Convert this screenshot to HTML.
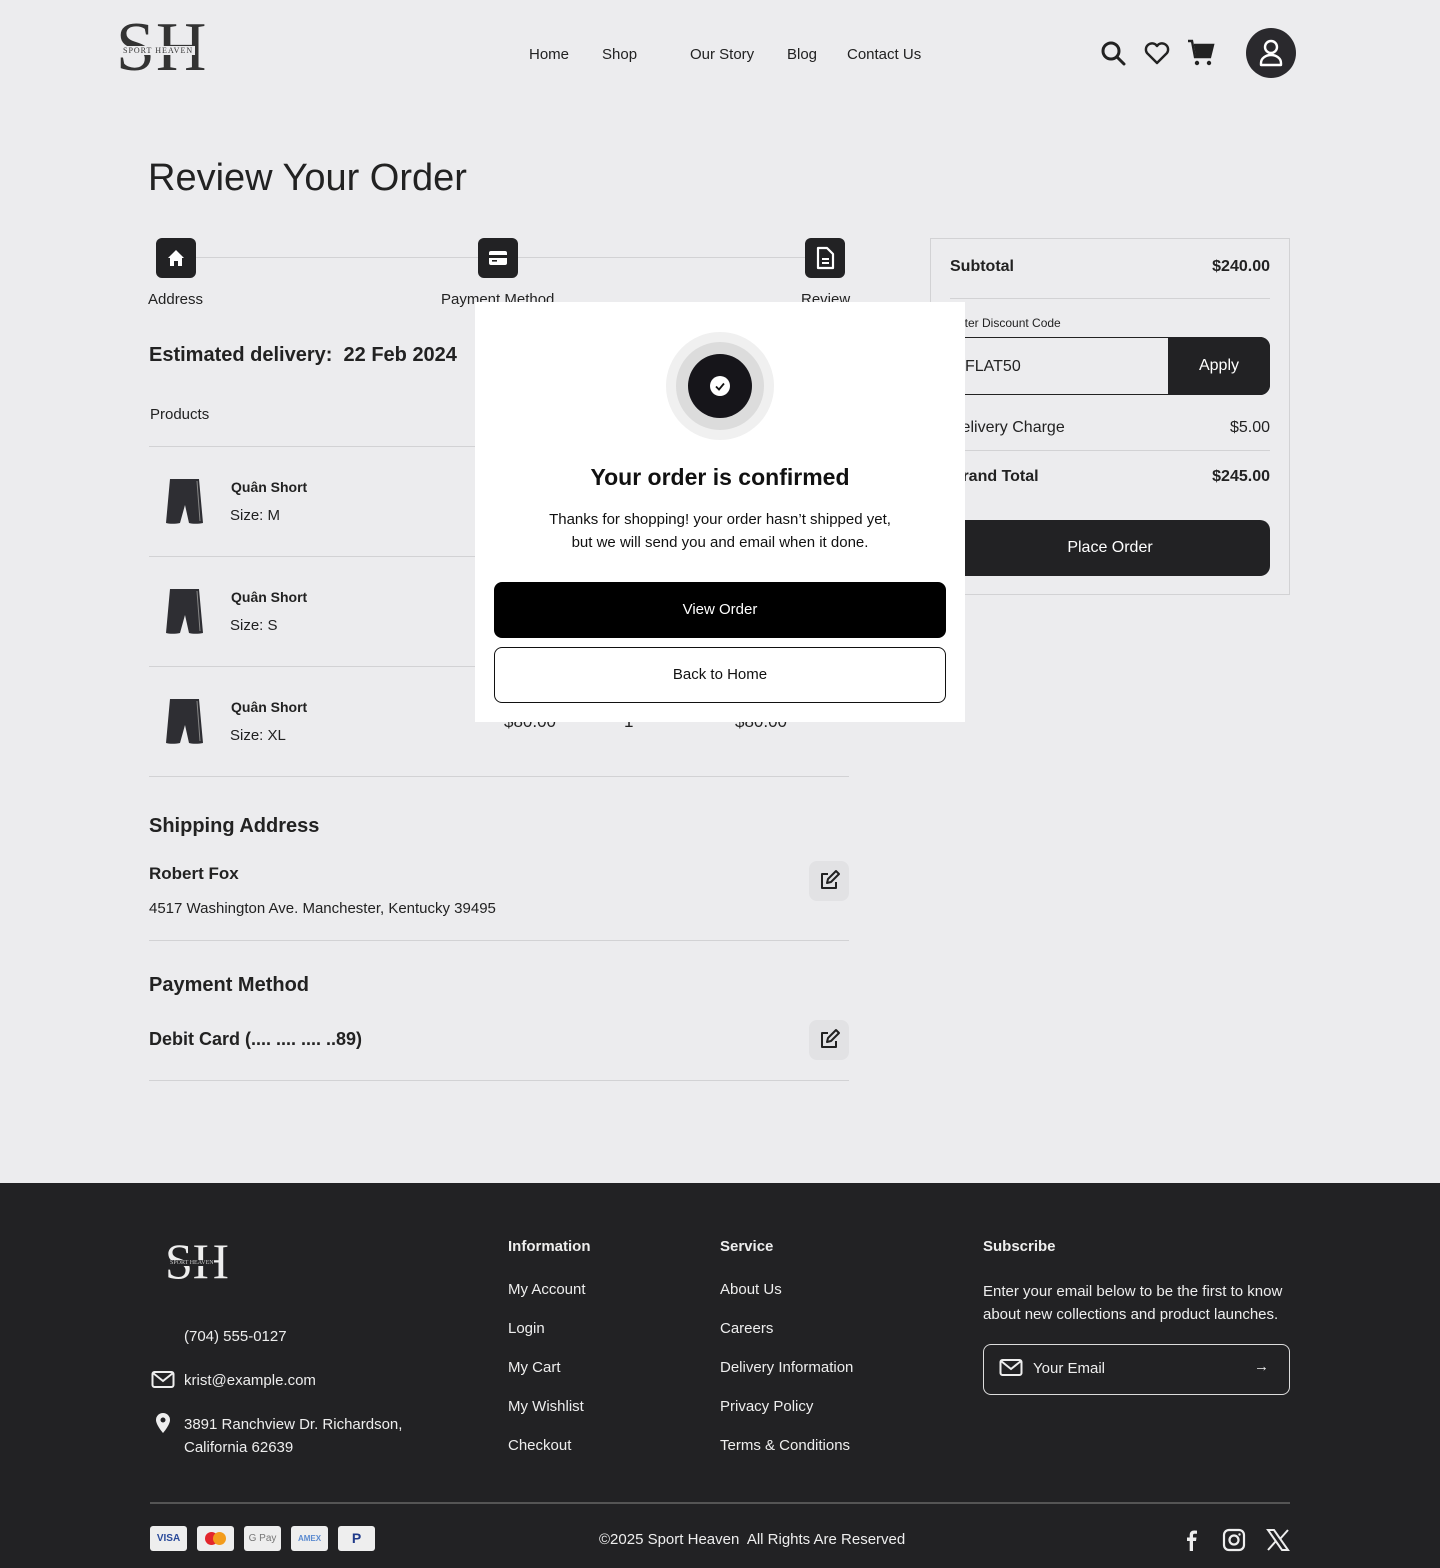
<!DOCTYPE html>
<html><head><meta charset="utf-8">
<style>
*{margin:0;padding:0;box-sizing:border-box}
body{width:1440px;height:1568px;background:#ececee;font-family:"Liberation Sans",sans-serif;color:#222;position:relative;overflow:hidden}
.a{position:absolute;white-space:nowrap}
.nav{font-size:15px;color:#222;top:46px}
.hr{position:absolute;height:1px;background:#d2d2d4}
.step{position:absolute;width:40px;height:40px;background:#222224;border-radius:6px;top:238px}
.b{font-weight:bold}
.pimg{position:absolute;left:165px;width:40px;height:48px}
.edit{position:absolute;left:809px;width:40px;height:40px;border-radius:8px;background:#e2e2e4}
.f{color:#eee;font-size:15px}
.pay{position:absolute;top:1526px;width:37px;height:25px;background:#eee;border-radius:3px;font-size:10px;font-weight:bold;text-align:center;line-height:25px}
.r{text-align:right}
</style></head><body>

<div class="a" style="left:116px;top:10px;font-family:'Liberation Serif',serif;font-size:70px;line-height:76px;color:#333;letter-spacing:1px">SH</div>
<div class="a" style="left:121px;top:46px;font-family:'Liberation Serif',serif;font-size:8px;color:#333;letter-spacing:1px;background:#ececee;padding:0 2px">SPORT HEAVEN</div>

<div class="a nav" style="left:529px">Home</div>
<div class="a nav" style="left:602px">Shop</div>
<div class="a nav" style="left:690px">Our Story</div>
<div class="a nav" style="left:787px">Blog</div>
<div class="a nav" style="left:847px">Contact Us</div>

<svg class="a" style="left:1100px;top:40px" width="26" height="26" viewBox="0 0 26 26"><circle cx="11" cy="11" r="8" fill="none" stroke="#222" stroke-width="3"/><path d="M17 17l7 7" stroke="#222" stroke-width="3" stroke-linecap="round"/></svg>
<svg class="a" style="left:1144px;top:41px" width="26" height="24" viewBox="0 0 26 24"><path d="M13 22L3 12a5.5 5.5 0 0 1 10-7a5.5 5.5 0 0 1 10 7z" fill="none" stroke="#222" stroke-width="2.4" stroke-linejoin="round"/></svg>
<svg class="a" style="left:1187px;top:39px" width="28" height="28" viewBox="0 0 28 28"><path d="M1 2h4l3 16h15l3-12H7" fill="none" stroke="#222" stroke-width="2.4"/><path d="M7 6h19l-3 12H9z" fill="#222"/><circle cx="10" cy="24" r="2.2" fill="#222"/><circle cx="22" cy="24" r="2.2" fill="#222"/></svg>
<div class="a" style="left:1246px;top:28px;width:50px;height:50px;border-radius:50%;background:#2a292d"></div>
<svg class="a" style="left:1258px;top:38px" width="26" height="30" viewBox="0 0 26 30"><circle cx="13" cy="9" r="6" fill="none" stroke="#fff" stroke-width="2.4"/><path d="M3 25a10 8 0 0 1 20 0v2H3z" fill="none" stroke="#fff" stroke-width="2.4" stroke-linejoin="round"/></svg>

<div class="a" style="left:148px;top:157px;font-size:38px;color:#222">Review Your Order</div>

<div class="hr" style="left:176px;top:257px;width:650px"></div>
<div class="step" style="left:156px"><svg width="40" height="40" viewBox="0 0 40 40"><path d="M12 20l8-8 8 8h-2v8h-4v-5h-4v5h-4v-8z" fill="#fff"/></svg></div>
<div class="step" style="left:478px"><svg width="40" height="40" viewBox="0 0 40 40"><rect x="11" y="13" width="18" height="14" rx="2" fill="#fff"/><rect x="11" y="17" width="18" height="3" fill="#222"/><rect x="14" y="22" width="5" height="1.6" fill="#222"/></svg></div>
<div class="step" style="left:805px"><svg width="40" height="40" viewBox="0 0 40 40"><path d="M13 10h9l6 6v14H13z" fill="none" stroke="#fff" stroke-width="2.2" stroke-linejoin="round"/><path d="M17 21h7M17 25h7" stroke="#fff" stroke-width="2"/></svg></div>
<div class="a" style="left:148px;top:291px;font-size:15px">Address</div>
<div class="a" style="left:441px;top:291px;font-size:15px">Payment Method</div>
<div class="a" style="left:801px;top:291px;font-size:15px">Review</div>

<div class="a b" style="left:149px;top:344px;font-size:20px">Estimated delivery:&nbsp; 22 Feb 2024</div>
<div class="a" style="left:150px;top:406px;font-size:15px">Products</div>
<div class="hr" style="left:149px;top:446px;width:700px"></div>

<svg class="pimg" style="top:477px" viewBox="0 0 40 48"><path d="M5 2h29l4 44c-5 1-10 1-14 0l-4-18-5 18c-5 1-10 1-14 0z" fill="#2e2e33"/><path d="M32 4l3 40" stroke="#888" stroke-width="1"/></svg>
<div class="a b" style="left:231px;top:479px;font-size:14px">Quân Short</div>
<div class="a" style="left:230px;top:507px;font-size:15px">Size: M</div>
<div class="hr" style="left:149px;top:556px;width:700px"></div>
<svg class="pimg" style="top:587px" viewBox="0 0 40 48"><path d="M5 2h29l4 44c-5 1-10 1-14 0l-4-18-5 18c-5 1-10 1-14 0z" fill="#2e2e33"/><path d="M32 4l3 40" stroke="#888" stroke-width="1"/></svg>
<div class="a b" style="left:231px;top:589px;font-size:14px">Quân Short</div>
<div class="a" style="left:230px;top:617px;font-size:15px">Size: S</div>
<div class="hr" style="left:149px;top:666px;width:700px"></div>
<svg class="pimg" style="top:697px" viewBox="0 0 40 48"><path d="M5 2h29l4 44c-5 1-10 1-14 0l-4-18-5 18c-5 1-10 1-14 0z" fill="#2e2e33"/><path d="M32 4l3 40" stroke="#888" stroke-width="1"/></svg>
<div class="a b" style="left:231px;top:699px;font-size:14px">Quân Short</div>
<div class="a" style="left:230px;top:727px;font-size:15px">Size: XL</div>
<div class="a" style="left:504px;top:712px;font-size:17px">$80.00</div>
<div class="a" style="left:624px;top:712px;font-size:17px">1</div>
<div class="a" style="left:735px;top:712px;font-size:17px">$80.00</div>
<div class="hr" style="left:149px;top:776px;width:700px"></div>

<div class="a b" style="left:149px;top:815px;font-size:20px">Shipping Address</div>
<div class="a b" style="left:149px;top:864px;font-size:17px">Robert Fox</div>
<div class="a" style="left:149px;top:900px;font-size:15px">4517 Washington Ave. Manchester, Kentucky 39495</div>
<div class="edit" style="top:861px"><svg width="40" height="40" viewBox="0 0 40 40"><path d="M19 13h-6v14h14v-6" fill="none" stroke="#222" stroke-width="2" stroke-linejoin="round"/><path d="M18 22l1-4 8-8 3 3-8 8z" fill="none" stroke="#222" stroke-width="2" stroke-linejoin="round"/></svg></div>
<div class="hr" style="left:149px;top:940px;width:700px"></div>

<div class="a b" style="left:149px;top:974px;font-size:20px">Payment Method</div>
<div class="a b" style="left:149px;top:1029px;font-size:18px">Debit Card (.... .... .... ..89)</div>
<div class="edit" style="top:1020px"><svg width="40" height="40" viewBox="0 0 40 40"><path d="M19 13h-6v14h14v-6" fill="none" stroke="#222" stroke-width="2" stroke-linejoin="round"/><path d="M18 22l1-4 8-8 3 3-8 8z" fill="none" stroke="#222" stroke-width="2" stroke-linejoin="round"/></svg></div>
<div class="hr" style="left:149px;top:1080px;width:700px"></div>

<div class="a" style="left:930px;top:238px;width:360px;height:357px;border:1px solid #d2d2d4"></div>
<div class="a b" style="left:950px;top:258px;font-size:16px">Subtotal</div>
<div class="a b r" style="left:1100px;width:170px;top:258px;font-size:16px">$240.00</div>
<div class="hr" style="left:950px;top:298px;width:320px"></div>
<div class="a" style="left:950px;top:316px;font-size:12px">Enter Discount Code</div>
<div class="a" style="left:950px;top:337px;width:320px;height:58px;border:1px solid #222;border-radius:0 10px 10px 0"></div>
<div class="a" style="left:965px;top:358px;font-size:16px">FLAT50</div>
<div class="a" style="left:1168px;top:337px;width:102px;height:58px;background:#222224;border-radius:0 10px 10px 0;color:#fff;font-size:16px;text-align:center;line-height:58px">Apply</div>
<div class="a" style="left:950px;top:419px;font-size:16px">Delivery Charge</div>
<div class="a r" style="left:1100px;width:170px;top:419px;font-size:16px">$5.00</div>
<div class="hr" style="left:950px;top:450px;width:320px"></div>
<div class="a b" style="left:950px;top:468px;font-size:16px">Grand Total</div>
<div class="a b r" style="left:1100px;width:170px;top:468px;font-size:16px">$245.00</div>
<div class="a" style="left:950px;top:520px;width:320px;height:56px;background:#222224;border-radius:10px;color:#fff;font-size:16px;text-align:center;line-height:56px">Place Order</div>

<div class="a" style="left:475px;top:302px;width:490px;height:420px;background:#fff"></div>
<div class="a" style="left:666px;top:332px;width:108px;height:108px;border-radius:50%;background:#f0f0f0"></div>
<div class="a" style="left:676px;top:342px;width:88px;height:88px;border-radius:50%;background:#dcdcdc"></div>
<div class="a" style="left:688px;top:354px;width:64px;height:64px;border-radius:50%;background:#16151a"></div>
<div class="a" style="left:710px;top:376px;width:20px;height:20px;border-radius:50%;background:#fff"></div>
<svg class="a" style="left:710px;top:376px" width="20" height="20" viewBox="0 0 20 20"><path d="M6 10.5l3 3 5-6" fill="none" stroke="#111" stroke-width="1.8"/></svg>
<div class="a b" style="left:475px;width:490px;text-align:center;top:464px;font-size:23px;color:#111">Your order is confirmed</div>
<div class="a" style="left:475px;width:490px;text-align:center;top:508px;font-size:15px;line-height:23px;color:#111;white-space:normal">Thanks for shopping! your order hasn’t shipped yet,<br>but we will send you and email when it done.</div>
<div class="a" style="left:494px;top:582px;width:452px;height:56px;background:#000;border-radius:8px;color:#fff;font-size:15px;text-align:center;line-height:56px">View Order</div>
<div class="a" style="left:494px;top:647px;width:452px;height:56px;border:1px solid #111;border-radius:8px;color:#111;font-size:15px;text-align:center;line-height:54px">Back to Home</div>

<div class="a" style="left:0;top:1183px;width:1440px;height:385px;background:#222224"></div>
<div class="a" style="left:165px;top:1233px;font-family:'Liberation Serif',serif;font-size:50px;line-height:56px;color:#eee">SH</div>
<div class="a" style="left:170px;top:1260px;font-family:'Liberation Serif',serif;font-size:6px;color:#ccc;background:#222224">SPORT HEAVEN</div>
<div class="a f" style="left:184px;top:1328px">(704) 555-0127</div>
<svg class="a" style="left:151px;top:1370px" width="24" height="20" viewBox="0 0 24 20"><rect x="1.5" y="2" width="21" height="15" rx="2" fill="none" stroke="#eee" stroke-width="2"/><path d="M2 3l10 8 10-8" fill="none" stroke="#eee" stroke-width="2"/></svg>
<div class="a f" style="left:184px;top:1372px">krist@example.com</div>
<svg class="a" style="left:154px;top:1412px" width="18" height="22" viewBox="0 0 18 22"><path d="M9 1a7 7 0 0 1 7 7c0 5-7 13-7 13S2 13 2 8a7 7 0 0 1 7-7z" fill="#eee"/><circle cx="9" cy="8" r="2.5" fill="#222224"/></svg>
<div class="a f" style="left:184px;top:1413px;line-height:23px">3891 Ranchview Dr. Richardson,<br>California 62639</div>

<div class="a f b" style="left:508px;top:1238px">Information</div>
<div class="a f" style="left:508px;top:1281px">My Account</div>
<div class="a f" style="left:508px;top:1320px">Login</div>
<div class="a f" style="left:508px;top:1359px">My Cart</div>
<div class="a f" style="left:508px;top:1398px">My Wishlist</div>
<div class="a f" style="left:508px;top:1437px">Checkout</div>

<div class="a f b" style="left:720px;top:1238px">Service</div>
<div class="a f" style="left:720px;top:1281px">About Us</div>
<div class="a f" style="left:720px;top:1320px">Careers</div>
<div class="a f" style="left:720px;top:1359px">Delivery Information</div>
<div class="a f" style="left:720px;top:1398px">Privacy Policy</div>
<div class="a f" style="left:720px;top:1437px">Terms &amp; Conditions</div>

<div class="a f b" style="left:983px;top:1238px">Subscribe</div>
<div class="a f" style="left:983px;top:1280px;line-height:23px">Enter your email below to be the first to know<br>about new collections and product launches.</div>
<div class="a" style="left:983px;top:1344px;width:307px;height:51px;border:1px solid #ddd;border-radius:8px"></div>
<svg class="a" style="left:999px;top:1358px" width="24" height="20" viewBox="0 0 24 20"><rect x="1.5" y="2" width="21" height="15" rx="2" fill="none" stroke="#eee" stroke-width="2"/><path d="M2 3l10 8 10-8" fill="none" stroke="#eee" stroke-width="2"/></svg>
<div class="a f" style="left:1033px;top:1360px">Your Email</div>
<div class="a f" style="left:1254px;top:1358px">→</div>

<div class="a" style="left:150px;top:1502px;width:1140px;height:2px;background:#555"></div>
<div class="pay" style="left:150px;color:#2a4a9a">VISA</div>
<div class="pay" style="left:197px"><span style="display:inline-block;width:13px;height:13px;border-radius:50%;background:#e3262c;margin-top:6px"></span><span style="display:inline-block;width:13px;height:13px;border-radius:50%;background:#f39c1c;margin-left:-5px"></span></div>
<div class="pay" style="left:244px;color:#777;font-weight:normal">G Pay</div>
<div class="pay" style="left:291px;color:#5a8ad0;font-size:8px">AMEX</div>
<div class="pay" style="left:338px;color:#1f3a8a;font-size:14px">P</div>
<div class="a f" style="left:599px;top:1531px">©2025 Sport Heaven&nbsp; All Rights Are Reserved</div>
<svg class="a" style="left:1180px;top:1528px" width="22" height="24" viewBox="0 0 22 24"><path d="M13 23V13h3l.5-3.5H13V7.5c0-1 .3-1.7 1.8-1.7H17V2.6A25 25 0 0 0 14.2 2.5C11.6 2.5 9.7 4 9.7 7v2.5H7V13h2.7v10z" fill="#eee"/></svg>
<svg class="a" style="left:1222px;top:1528px" width="24" height="24" viewBox="0 0 24 24"><rect x="2" y="2" width="20" height="20" rx="5" fill="none" stroke="#eee" stroke-width="2.2"/><circle cx="12" cy="12" r="4.5" fill="none" stroke="#eee" stroke-width="2.2"/><circle cx="17.5" cy="6.5" r="1.2" fill="#eee"/></svg>
<svg class="a" style="left:1266px;top:1528px" width="24" height="24" viewBox="0 0 24 24"><path d="M2 2h6l14 20h-6z" fill="none" stroke="#eee" stroke-width="2"/><path d="M2 22L10 13M14 11l8-9" stroke="#eee" stroke-width="2"/></svg>
</body></html>
